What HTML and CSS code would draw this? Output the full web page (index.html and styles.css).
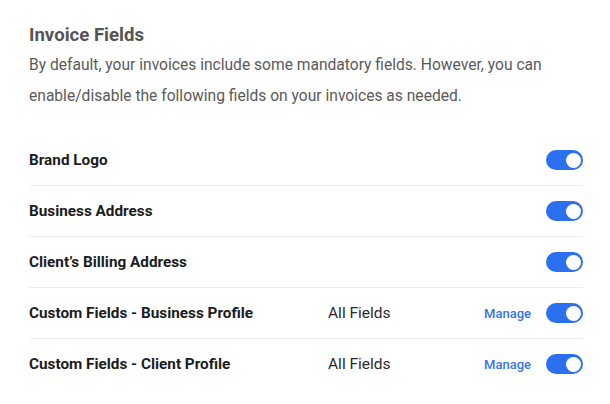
FILE: index.html
```html
<!DOCTYPE html>
<html>
<head>
<meta charset="utf-8">
<link rel="stylesheet" href="styles.css">
</head>
<body>
<div class="panel">
  <h1 class="title">Invoice Fields</h1>
  <p class="desc">By default, your invoices include some mandatory fields. However, you can enable/disable the following fields on your invoices as needed.</p>
  <div class="list">
    <div class="row">
      <span class="label">Brand Logo</span>
      <span class="value"></span>
      <span class="manage"></span>
      <span class="toggle"><span class="knob"></span></span>
    </div>
    <div class="row">
      <span class="label">Business Address</span>
      <span class="value"></span>
      <span class="manage"></span>
      <span class="toggle"><span class="knob"></span></span>
    </div>
    <div class="row">
      <span class="label">Client’s Billing Address</span>
      <span class="value"></span>
      <span class="manage"></span>
      <span class="toggle"><span class="knob"></span></span>
    </div>
    <div class="row">
      <span class="label">Custom Fields - Business Profile</span>
      <span class="value">All Fields</span>
      <a class="manage">Manage</a>
      <span class="toggle"><span class="knob"></span></span>
    </div>
    <div class="row">
      <span class="label">Custom Fields - Client Profile</span>
      <span class="value">All Fields</span>
      <a class="manage">Manage</a>
      <span class="toggle"><span class="knob"></span></span>
    </div>
  </div>
</div>
</body>
</html>
```
FILE: styles.css
```css
html, body {
  margin: 0;
  padding: 0;
  background: #ffffff;
}
body {
  font-family: Roboto, "Liberation Sans", sans-serif;
}
.panel {
  padding: 21px 27px 0 29px;
}
.title {
  margin: 0;
  font-size: 18.6px;
  line-height: 29px;
  font-weight: 700;
  color: #555555;
}
.desc {
  margin: 0;
  font-size: 15.6px;
  line-height: 31px;
  color: #5a5a5a;
}
.list {
  margin-top: 23px;
}
.row {
  display: grid;
  grid-template-columns: 299px 1fr auto auto;
  align-items: center;
  column-gap: 15px;
  height: 50px;
  border-bottom: 1px solid #ececec;
}
.row:last-child {
  border-bottom: none;
}
.label {
  font-size: 15.3px;
  font-weight: 700;
  color: #1c1c1c;
}
.value {
  font-size: 15.5px;
  color: #2a2a2a;
  margin-left: -15px;
}
.manage {
  font-size: 13px;
  font-weight: 500;
  color: #3574e8;
}
.toggle {
  position: relative;
  display: block;
  width: 37px;
  height: 20px;
  border-radius: 10px;
  background: #2c6ff0;
}
.knob {
  position: absolute;
  top: 2.5px;
  right: 2px;
  width: 15px;
  height: 15px;
  border-radius: 50%;
  background: #ffffff;
}
```
